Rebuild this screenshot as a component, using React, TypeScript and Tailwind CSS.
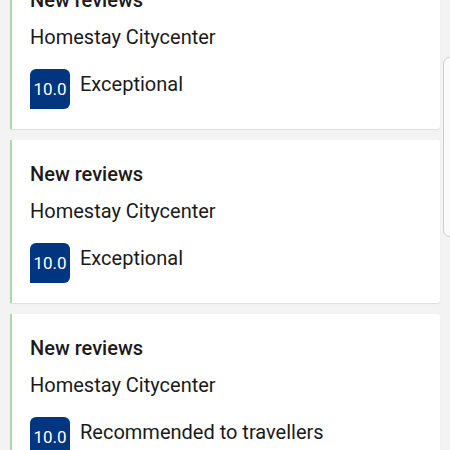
import React from "react";

const cards = [
  { title: "New reviews", place: "Homestay Citycenter", score: "10.0", label: "Exceptional" },
  { title: "New reviews", place: "Homestay Citycenter", score: "10.0", label: "Exceptional" },
  { title: "New reviews", place: "Homestay Citycenter", score: "10.0", label: "Recommended to travellers" },
];

export default function App() {
  return (
    <div
      className="relative w-[450px] h-[450px] overflow-hidden bg-[#f3f3f3]"
      style={{ fontFamily: "Roboto, 'Noto Sans', sans-serif" }}
    >
      <div className="flex flex-col gap-[11px] pl-[10px] pr-[10px] -mt-[34px]">
        {cards.map((c, i) => (
          <div
            key={i}
            className="h-[163px] bg-white border-l-[2px] border-[#a8dba9] rounded-r-[3px] shadow-[0_1px_1px_rgba(0,0,0,0.08)] pl-[18px] pt-[22px] flex flex-col"
          >
            <div className="text-[20px] leading-[24px] font-medium text-[#1a1a1a]">{c.title}</div>
            <div className="mt-[13px] text-[20px] leading-[24px] text-[#1a1a1a]">{c.place}</div>
            <div className="mt-[20px] flex items-start gap-[10px]">
              <div className="w-[40px] h-[40px] bg-[#003580] rounded-tl-[6px] rounded-tr-[6px] rounded-br-[6px] flex items-center justify-center text-white text-[17px] pt-[2px]">
                {c.score}
              </div>
              <div className="text-[20px] leading-[24px] text-[#1a1a1a] mt-[3px]">{c.label}</div>
            </div>
          </div>
        ))}
      </div>
      <div className="absolute left-[443px] top-[57px] w-[20px] h-[180px] rounded-[7px] border border-[#cfcfcf] bg-[#fafafa]" />
    </div>
  );
}
